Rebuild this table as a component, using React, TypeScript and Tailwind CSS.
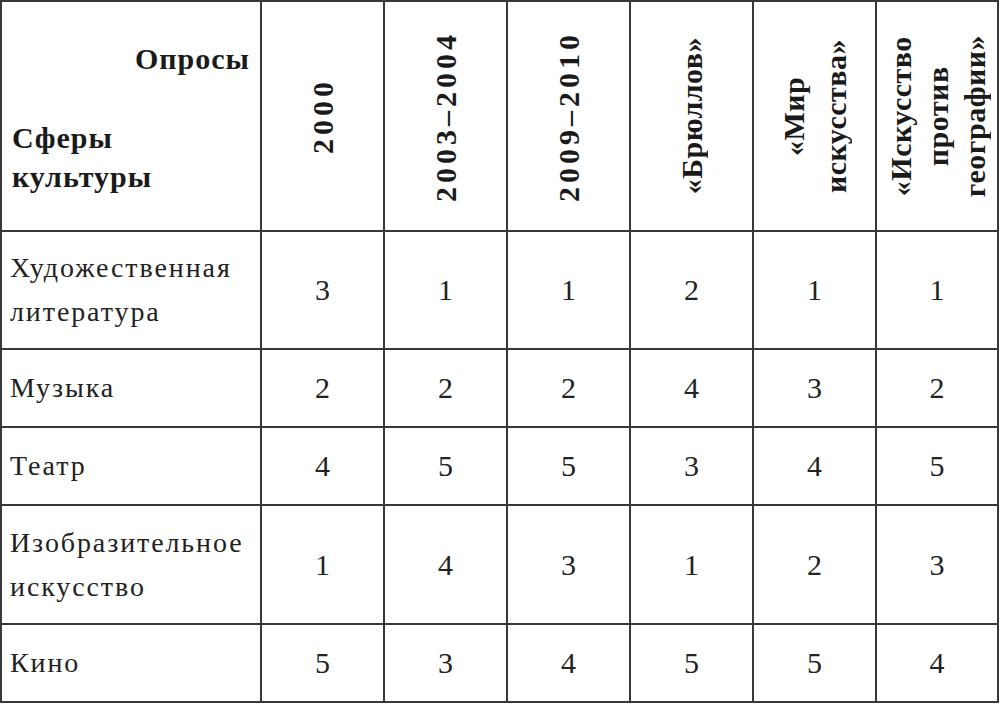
import React from 'react';

const serif = "[font-family:'Liberation_Serif','Times_New_Roman',serif]";

const columns = [
  { lines: ['2000'], numeric: true },
  { lines: ['2003–2004'], numeric: true },
  { lines: ['2009–2010'], numeric: true },
  { lines: ['«Брюллов»'], numeric: false },
  { lines: ['«Мир', 'искусства»'], numeric: false, leading: 'leading-[42px]' },
  { lines: ['«Искусство', 'против', 'географии»'], numeric: false, leading: 'leading-[37px]' },
];

const rows: { name: string[]; values: number[] }[] = [
  { name: ['Художественная', 'литература'], values: [3, 1, 1, 2, 1, 1] },
  { name: ['Музыка'], values: [2, 2, 2, 4, 3, 2] },
  { name: ['Театр'], values: [4, 5, 5, 3, 4, 5] },
  { name: ['Изобразительное', 'искусство'], values: [1, 4, 3, 1, 2, 3] },
  { name: ['Кино'], values: [5, 3, 4, 5, 5, 4] },
];

function Lines({ lines }: { lines: string[] }) {
  return (
    <>
      {lines.map((l, i) => (
        <React.Fragment key={i}>
          {i > 0 && <br />}
          {l}
        </React.Fragment>
      ))}
    </>
  );
}

function HeaderCell({ lines, numeric, leading }: { lines: string[]; numeric: boolean; leading?: string }) {
  return (
    <div className="bg-white flex items-center justify-center">
      <span
        className={`[writing-mode:vertical-rl] rotate-180 text-center font-bold text-[30px] text-[#1a1a1a] ${
          numeric ? 'tracking-[4px]' : 'tracking-[0.5px]'
        } ${leading ?? 'leading-none'}`}
      >
        <Lines lines={lines} />
      </span>
    </div>
  );
}

export default function App() {
  return (
    <div className={`min-h-screen bg-white ${serif}`}>
      <div className="w-[999px] h-[703px] bg-[#383838] p-[2px] grid gap-[2px] grid-cols-[258px_121px_121px_121px_121px_121px_120px] grid-rows-[228px_116px_76px_76px_117px_76px]">
        {/* corner */}
        <div className="bg-white flex flex-col px-[10px] font-bold text-[30px] text-[#1a1a1a] tracking-[1px]">
          <div className="text-right leading-none pt-[42px]">Опросы</div>
          <div className="leading-[39px] mt-[44px]">
            Сферы
            <br />
            культуры
          </div>
        </div>
        {columns.map((c, i) => (
          <HeaderCell key={i} lines={c.lines} numeric={c.numeric} leading={c.leading} />
        ))}

        {rows.map((r, ri) => (
          <React.Fragment key={ri}>
            <div className="bg-white flex items-center pl-[8px] text-[28px] tracking-[1.9px] text-[#222] leading-[44px]">
              <div>
                <Lines lines={r.name} />
              </div>
            </div>
            {r.values.map((v, vi) => (
              <div key={vi} className="bg-white flex items-center justify-center text-[30px] text-[#222] leading-none">
                {v}
              </div>
            ))}
          </React.Fragment>
        ))}
      </div>
    </div>
  );
}
